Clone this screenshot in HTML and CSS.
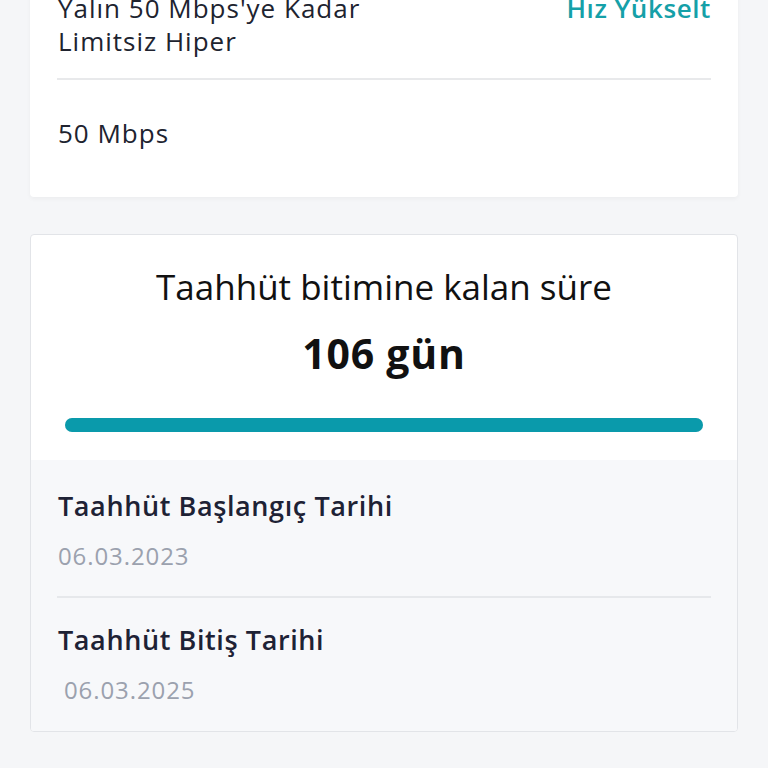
FILE: index.html
```html
<!DOCTYPE html>
<html lang="tr">
<head>
    <meta charset="UTF-8">
    <meta name="viewport" content="width=device-width, initial-scale=1.0">
    <title>Taahhüt Bilgileri</title>
    <link rel="stylesheet" href="styles.css">
</head>
<body>
    <div class="page">
        <div class="card package-card">
            <div class="package-head">
                <div class="package-name">Yalın 50 Mbps'ye Kadar<br>Limitsiz Hiper</div>
                <a class="upgrade-link" href="#">Hız Yükselt</a>
            </div>
            <div class="package-speed">50 Mbps</div>
        </div>

        <div class="card commit-card">
            <div class="commit-top">
                <div class="commit-title">Taahhüt bitimine kalan süre</div>
                <div class="commit-days">106 gün</div>
                <div class="progress">
                    <div class="progress-fill" style="width: 100%"></div>
                </div>
            </div>
            <div class="commit-dates">
                <div class="date-row">
                    <div class="date-label">Taahhüt Başlangıç Tarihi</div>
                    <div class="date-value">06.03.2023</div>
                </div>
                <div class="date-row">
                    <div class="date-label">Taahhüt Bitiş Tarihi</div>
                    <div class="date-value indent">06.03.2025</div>
                </div>
            </div>
        </div>
    </div>
</body>
</html>
```

FILE: styles.css
```css
body {
    margin: 0;
    background-color: #f5f6f8;
    font-family: "Open Sans", Lato, sans-serif;
    color: #20232f;
}

.page {
    padding: 0 30px;
}

.card {
    background-color: #fff;
    border-radius: 4px;
}

/* Package card (top, partly scrolled away) */
.package-card {
    margin-top: -30px;
    padding: 22px 27px 0 27px;
    height: 205px;
    box-shadow: 0 2px 4px rgba(0, 0, 0, 0.04);
}

.package-head {
    display: flex;
    justify-content: space-between;
    align-items: flex-start;
    padding-bottom: 20px;
    border-bottom: 2px solid #e8e9eb;
}

.package-name {
    font-size: 26px;
    line-height: 33px;
    letter-spacing: 1px;
    padding-left: 1px;
}

.upgrade-link {
    color: #15a0a8;
    font-size: 26px;
    font-weight: 600;
    line-height: 33px;
    letter-spacing: 0.6px;
    text-decoration: none;
}

.package-speed {
    font-size: 26px;
    letter-spacing: 1px;
    padding-top: 35px;
    padding-left: 1px;
}

/* Commitment card */
.commit-card {
    margin-top: 37px;
    border: 1px solid #e2e4e8;
    overflow: hidden;
}

.commit-top {
    padding: 32px 34px 28px 34px;
    text-align: center;
    color: #111;
}

.commit-title {
    font-size: 35px;
    line-height: 40px;
}

.commit-days {
    margin-top: 22px;
    font-size: 41px;
    font-weight: 700;
    line-height: 48px;
    letter-spacing: 0.8px;
}

.progress {
    margin-top: 41px;
    height: 14px;
    border-radius: 7px;
    background-color: #e4e7ea;
}

.progress-fill {
    height: 100%;
    border-radius: 7px;
    background-color: #0a9aab;
}

.commit-dates {
    background-color: #f7f8fa;
    padding: 0 26px;
}

.date-row {
    padding: 30px 0 25px 1px;
}

.date-row + .date-row {
    border-top: 2px solid #e6e8eb;
    padding-top: 26px;
    padding-bottom: 26px;
}

.date-label {
    font-size: 27px;
    font-weight: 600;
    line-height: 32px;
    letter-spacing: 0.6px;
    color: #1e2235;
}

.date-value {
    margin-top: 19px;
    font-size: 24px;
    line-height: 30px;
    letter-spacing: 0.9px;
    color: #9ba1ae;
}

.date-value.indent {
    padding-left: 6px;
}
```
